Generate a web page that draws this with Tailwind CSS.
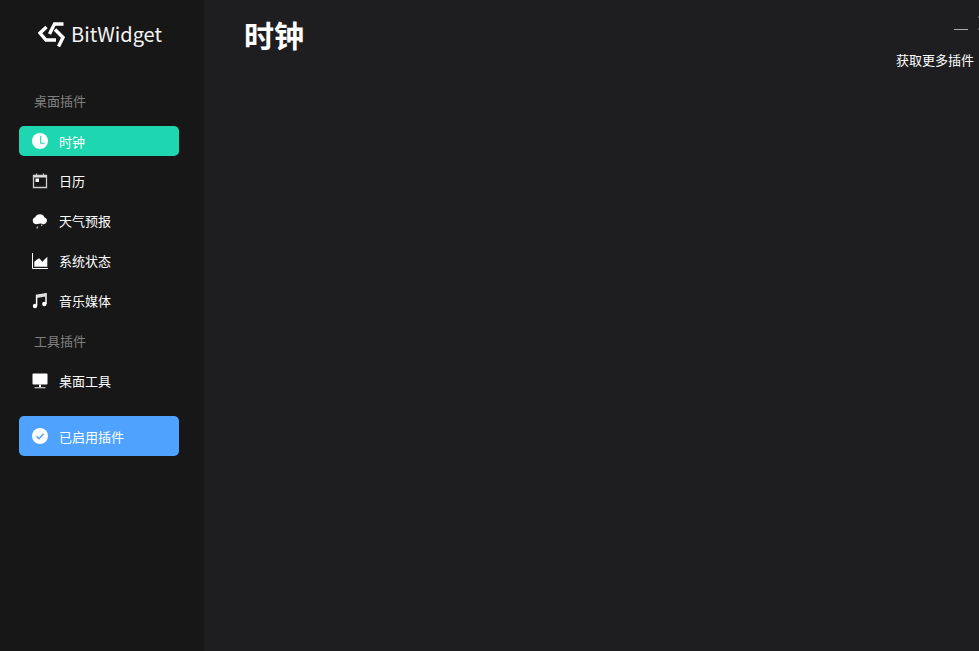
<!DOCTYPE html>
<html lang="zh-CN">
<head>
<meta charset="utf-8">
<script src="https://cdn.jsdelivr.net/npm/@tailwindcss/browser@4"></script>
</head>
<body class="m-0 h-[651px] w-[979px] overflow-hidden bg-[#1e1e20] font-['Noto_Sans_CJK_SC','Noto_Sans',sans-serif] text-white">
<div class="flex h-full">
  <aside class="flex h-full w-[204px] shrink-0 flex-col bg-[#171717] pl-[19px]">
    <div class="flex h-[68px] items-center gap-[6px] pl-[19px]">
      <svg class="h-[27px] w-[27px]" viewBox="0 0 27 27" fill="none" stroke="#fff" stroke-width="3.4"><path d="M25.5 3H16.5L11.5 13"/><path d="M8.5 6L2 12L8 19H18"/><path d="M17 8.5L25 16.5L20.5 25.5"/></svg>
      <span class="text-[20px] leading-none text-[#f4f4f4]">BitWidget</span>
    </div>
    <div class="mt-[24px] flex h-[20px] items-center pb-[2px] pl-[15px] text-[13px] text-[#808080]">桌面插件</div>
    <nav class="mt-[14px] flex w-[160px] flex-col gap-[10px] text-[13px]">
      <a class="flex h-[30px] items-center gap-[11px] rounded-[5px] bg-[#1ed6b0] pl-[13px]">
        <svg class="h-4 w-4" viewBox="0 0 16 16"><circle cx="8" cy="8" r="8" fill="#fff"/><path d="M8.7 3V10.2H12.5" fill="none" stroke="#1ed6b0" stroke-width="1.1"/></svg>
        <span class="pt-[1px]">时钟</span>
      </a>
      <a class="flex h-[30px] items-center gap-[11px] pl-[13px]">
        <svg class="h-4 w-4" viewBox="0 0 16 16" fill="none"><path d="M1.5 2.5H14.5V14.5H1.5Z" stroke="#ccc" stroke-width="1.3"/><path d="M1.5 2.5H14.5V4.5H1.5Z" fill="#ddd"/><path d="M4.5 0.5V3M11.5 0.5V3" stroke="#ccc" stroke-width="1.2"/><rect x="3.5" y="5.5" width="3.5" height="3.5" fill="#fff"/></svg>
        <span>日历</span>
      </a>
      <a class="flex h-[30px] items-center gap-[11px] pl-[13px]">
        <svg class="h-4 w-4" viewBox="0 0 16 16" fill="#fff"><path d="M4 11.3A3.6 3.6 0 0 1 3.2 4.3A5 5 0 0 1 12.5 4.5A3.5 3.5 0 0 1 12 11.3L8.5 10.5Z"/><path d="M5.8 13.5L4.8 15.5M10.2 11.5L9.4 13" stroke="#ccc" stroke-width="1.1" fill="none"/></svg>
        <span>天气预报</span>
      </a>
      <a class="flex h-[30px] items-center gap-[11px] pl-[13px]">
        <svg class="h-4 w-4" viewBox="0 0 16 16" fill="#fff"><path d="M0.5 0V15.5H16" fill="none" stroke="#fff" stroke-width="1"/><path d="M2.3 13.7V8.7L5 6.5L7.3 5.3L10.3 8.7L15.3 3.7V13.7Z"/></svg>
        <span>系统状态</span>
      </a>
      <a class="flex h-[30px] items-center gap-[11px] pl-[13px]">
        <svg class="h-4 w-4" viewBox="0 0 16 16" fill="#fff"><circle cx="3" cy="13" r="2.2"/><circle cx="12.3" cy="11" r="2.2"/><path d="M4.6 13V2.5L14 1V11" fill="none" stroke="#fff" stroke-width="1.5"/><path d="M4.6 2.2L14 0.5V3.6L4.6 5Z" fill="#ddd"/></svg>
        <span>音乐媒体</span>
      </a>
    </nav>
    <div class="mt-[16px] flex h-[20px] items-center pb-[2px] pl-[15px] text-[13px] text-[#808080]">工具插件</div>
    <nav class="mt-[14px] flex w-[160px] flex-col text-[13px]">
      <a class="flex h-[30px] items-center gap-[11px] pl-[13px]">
        <svg class="h-4 w-4" viewBox="0 0 16 16" fill="#fff"><rect x="0.5" y="0.5" width="15" height="11" rx="1"/><path d="M7 11.5H9V14H7Z"/><path d="M2.5 14.7H13.5" stroke="#ccc" stroke-width="1.2"/></svg>
        <span>桌面工具</span>
      </a>
    </nav>
    <a class="mt-[20px] flex h-[40px] w-[160px] items-center gap-[11px] rounded-[5px] bg-[#4fa3ff] pl-[13px] text-[13px]">
      <svg class="h-4 w-4" viewBox="0 0 16 16"><circle cx="8" cy="8" r="8" fill="#fff"/><path d="M4.5 8.2L7 10.7L11.5 5.8" fill="none" stroke="#4fa3ff" stroke-width="1.5"/></svg>
      <span class="pt-[1px]">已启用插件</span>
    </a>
  </aside>
  <main class="relative flex-1">
    <h1 class="pl-[40px] pt-[10px] text-[30px] font-bold leading-[48px]">时钟</h1>
    <div class="absolute right-[11px] top-[29px] h-px w-[14px] bg-[#aaa]"></div>
    <div class="absolute right-0 top-[16px] h-[2px] w-px bg-[#555]"></div>
    <div class="absolute right-0 top-[28px] h-[2px] w-px bg-[#555]"></div>
    <div class="absolute right-[5px] top-[50px] w-[78px] whitespace-nowrap text-[13px] leading-5">获取更多插件</div>
  </main>
</div>
</body>
</html>
